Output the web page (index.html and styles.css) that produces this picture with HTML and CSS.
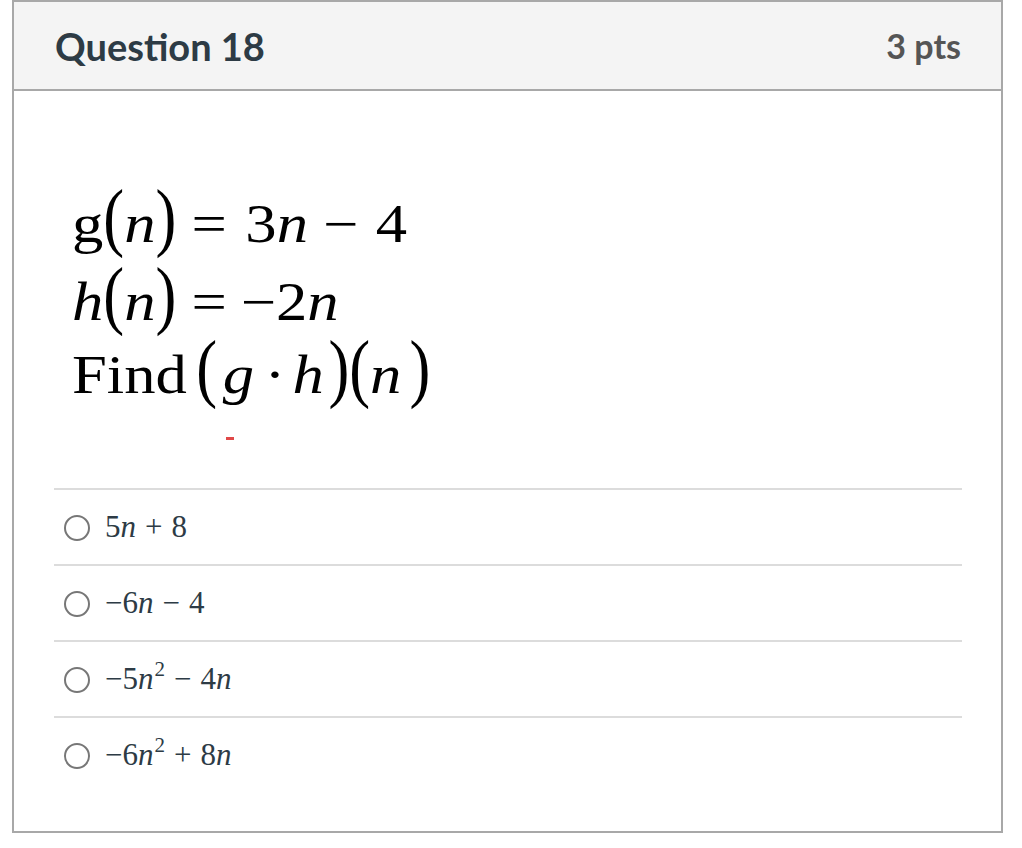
FILE: index.html
```html
<!DOCTYPE html>
<html>
<head>
<meta charset="utf-8">
<link rel="stylesheet" href="styles.css">
</head>
<body>
<div class="card">
  <div class="header">
    <div class="title">Question 18</div>
    <div class="pts">3 pts</div>
  </div>
  <div class="body">
    <div class="formula">
      <div class="eq">
        <div class="line l1">g<span class="p">(</span><i>n</i><span class="p">)</span><span class="op">=</span>3<i>n</i><span class="mi">−</span>4</div>
        <div class="line l2"><i>h</i><span class="p">(</span><i>n</i><span class="p">)</span><span class="op2">=</span>−2<i>n</i></div>
        <div class="line l3">Find<span class="sp"></span><span class="p">(</span><i class="g">g</i><span class="dot">·</span><i>h</i><span class="p pc">)</span><span class="p">(</span><i>n</i><span class="p pe">)</span></div>
      </div>
      <div class="redmark"></div>
    </div>
    <ul class="answers">
      <li class="answer"><span class="radio"></span><span class="math">5<i>n</i><span class="bin">+</span>8</span></li>
      <li class="answer"><span class="radio"></span><span class="math">−6<i>n</i><span class="bin">−</span>4</span></li>
      <li class="answer"><span class="radio"></span><span class="math">−5<i>n</i><sup>2</sup><span class="bin">−</span>4<i>n</i></span></li>
      <li class="answer"><span class="radio"></span><span class="math">−6<i>n</i><sup>2</sup><span class="bin">+</span>8<i>n</i></span></li>
    </ul>
  </div>
</div>
</body>
</html>
```
FILE: styles.css
```css
html, body {
  margin: 0;
  padding: 0;
  background: #fff;
}
.card {
  margin-left: 12px;
  width: 991px;
  box-sizing: border-box;
  border: 2px solid #a8a8a8;
  height: 833px;
}
.header {
  height: 87px;
  background: #f4f4f4;
  border-bottom: 2px solid #a8a8a8;
  display: flex;
  align-items: center;
  justify-content: space-between;
  padding: 0 40px 0 41px;
  font-family: Lato, "Liberation Sans", sans-serif;
  font-weight: 700;
}
.title {
  font-size: 38px;
  color: #2d3b45;
}
.pts {
  font-size: 34px;
  color: #555;
}
.body {
  padding: 95px 39px 0 40px;
}
.formula {
  position: relative;
  padding-left: 18px;
  height: 302px;
}
.eq {
  width: fit-content;
  font-family: "Liberation Serif", "Times New Roman", serif;
  font-size: 54px;
  color: #000;
  transform: scaleX(1.16);
  transform-origin: 0 0;
}
.line {
  white-space: nowrap;
  line-height: 76px;
}
.l1 {
  height: 78px;
}
.l2 {
  height: 73px;
}
.l3 {
  height: 76px;
}
.line i {
  font-style: italic;
}
.p {
  display: inline-block;
  line-height: 1;
  transform: translateY(-8px) scaleY(1.42);
}
.op {
  margin: 0 16px 0 13px;
}
.op2 {
  margin: 0 12px 0 13px;
}
.mi {
  margin: 0 15px 0 13px;
}
.sp {
  display: inline-block;
  width: 8px;
}
.g {
  margin-left: 5px;
}
.dot {
  margin: 0 6px 0 9px;
}
.pc {
  margin-left: 4px;
}
.pe {
  margin-left: 7px;
}
.redmark {
  position: absolute;
  left: 172px;
  top: 251px;
  width: 8px;
  height: 3px;
  background: #e04848;
}
.answers {
  list-style: none;
  margin: 0;
  padding: 0;
}
.answer {
  border-top: 2px solid #dcdcdc;
  height: 74px;
  display: flex;
  align-items: center;
  gap: 15px;
  padding-left: 10px;
}
.radio {
  width: 22px;
  height: 22px;
  border: 2px solid #777;
  border-radius: 50%;
  flex: none;
  margin-top: 1px;
}
.math {
  font-family: "Liberation Serif", "Times New Roman", serif;
  font-size: 31px;
  color: #2d3b45;
  white-space: nowrap;
}
.bin {
  margin: 0 9px;
}
.math sup {
  font-size: 21px;
  vertical-align: 13px;
  line-height: 0;
  margin-left: 1px;
}
```
